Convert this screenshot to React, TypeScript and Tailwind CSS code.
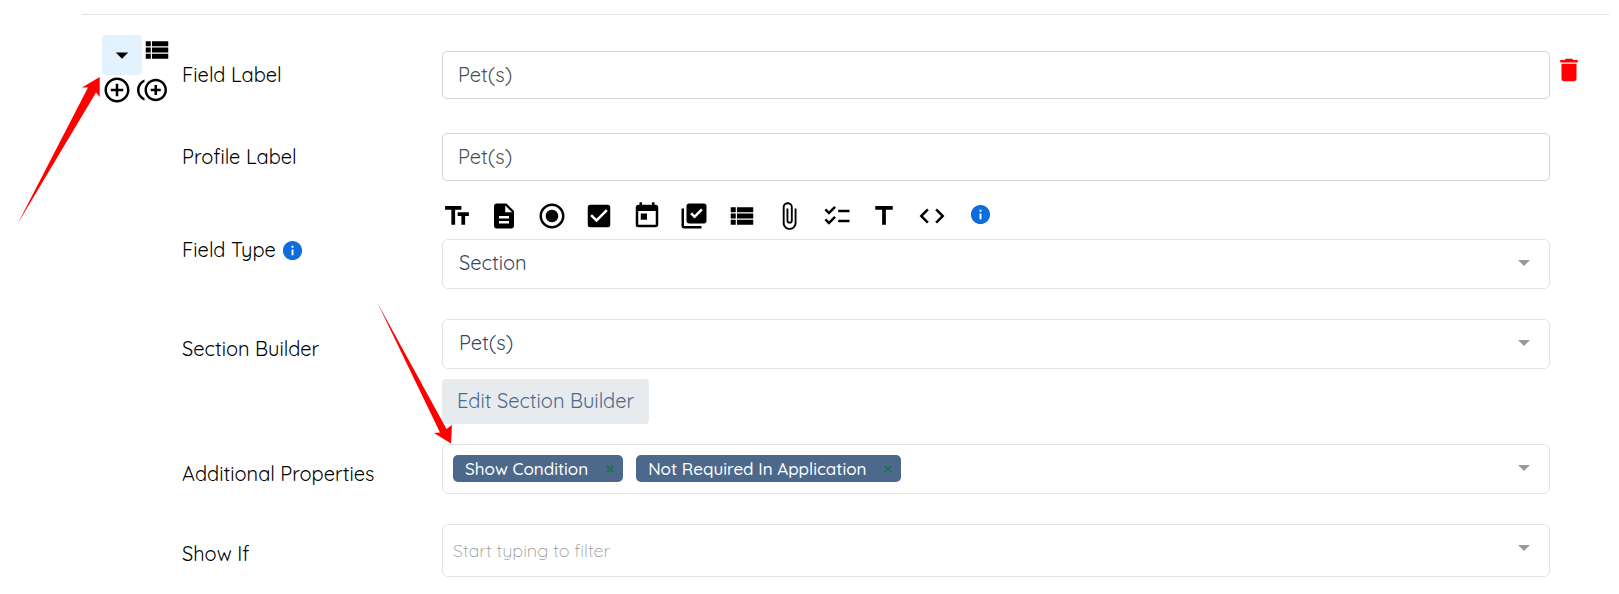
import { useState, type ReactNode } from "react";
import {
  MdAddCircleOutline,
  MdArrowDropDown,
  MdAttachFile,
  MdCheckBox,
  MdChecklist,
  MdCode,
  MdControlPointDuplicate,
  MdDelete,
  MdDescription,
  MdInfo,
  MdLibraryAddCheck,
  MdRadioButtonChecked,
  MdTextFields,
  MdTitle,
  MdToday,
  MdViewList,
} from "react-icons/md";

const fieldTypes = [
  { name: "Text", Icon: MdTextFields },
  { name: "Document", Icon: MdDescription },
  { name: "Radio", Icon: MdRadioButtonChecked },
  { name: "Checkbox", Icon: MdCheckBox },
  { name: "Date", Icon: MdToday },
  { name: "Multiple choice", Icon: MdLibraryAddCheck },
  { name: "Section", Icon: MdViewList },
  { name: "Attachment", Icon: MdAttachFile },
  { name: "Checklist", Icon: MdChecklist },
  { name: "Title", Icon: MdTitle },
  { name: "Code", Icon: MdCode },
];

const textBox =
  "block h-12 w-full rounded-[5px] border border-[#ced4da] bg-white px-[15px] pb-px text-xl text-[#495057] outline-none";
const dropBox = "block w-full rounded-md border border-[#e5e5e5] bg-white outline-none";

function Caret() {
  return (
    <svg
      className="pointer-events-none absolute top-[21px] right-5 h-[6px] w-3 fill-[#999]"
      viewBox="0 0 12 6"
      aria-hidden="true"
    >
      <path d="M0 0h12L6 6z" />
    </svg>
  );
}

type RowProps = { label: string; id: string; labelClass: string; hint?: ReactNode; children: ReactNode };

function Row({ label, id, labelClass, hint, children }: RowProps) {
  return (
    <div className="grid grid-cols-[260px_minmax(0,1fr)] items-start">
      <div className={`flex items-center gap-[5px] ${labelClass}`}>
        <label htmlFor={id} className="text-xl text-black">
          {label}
        </label>
        {hint}
      </div>
      <div>{children}</div>
    </div>
  );
}

function Select({ id, value }: { id: string; value: string }) {
  return (
    <div className="relative">
      <select id={id} className={`${dropBox} h-[50px] appearance-none px-4 pb-0.5 text-xl text-[#34495e]`}>
        <option>{value}</option>
      </select>
      <Caret />
    </div>
  );
}

export default function App() {
  const [label, setLabel] = useState("Pet(s)");
  const [profile, setProfile] = useState("Pet(s)");
  const [tags, setTags] = useState(["Show Condition", "Not Required In Application"]);

  return (
    <main className="relative bg-white pt-3.5 pr-2.5 pb-4 pl-[82px] font-['Quicksand','Lato',sans-serif]">
      <hr className="border-[#e2e2e2]" />
      <div className="flex pt-5 pl-5">
        <div className="grid w-20 shrink-0 grid-cols-[40px_32px] content-start">
          <button type="button" aria-label="Collapse" className="flex size-10 items-center justify-center rounded bg-[#e3f2ff]">
            <MdArrowDropDown className="size-[30px]" />
          </button>
          <button type="button" aria-label="Section" className="flex h-[30px] w-[30px] items-center justify-center">
            <MdViewList className="size-[30px]" />
          </button>
          <button type="button" aria-label="Add field">
            <MdAddCircleOutline className="size-[30px]" />
          </button>
          <button type="button" aria-label="Duplicate field" className="-ml-[5px]">
            <MdControlPointDuplicate className="size-[30px]" />
          </button>
        </div>

        <form className="min-w-0 flex-1 pt-4" onSubmit={(e) => e.preventDefault()}>
          <Row label="Field Label" id="field-label" labelClass="pt-2.5">
            <input id="field-label" className={textBox} value={label} onChange={(e) => setLabel(e.target.value)} />
          </Row>

          <div className="mt-[34px]">
            <Row label="Profile Label" id="profile-label" labelClass="pt-2.5">
              <input
                id="profile-label"
                className={textBox}
                value={profile}
                onChange={(e) => setProfile(e.target.value)}
              />
            </Row>
          </div>

          <div className="mt-5">
            <Row
              label="Field Type"
              id="field-type"
              labelClass="pt-[35px]"
              hint={<MdInfo className="size-[23px] text-[#0d6edb]" />}
            >
              <div className="mb-2 flex items-center gap-[5px]">
                <div className="grid w-[522px] grid-cols-11">
                  {fieldTypes.map(({ name, Icon }) => (
                    <button key={name} type="button" aria-label={name}>
                      <Icon className="size-[30px]" />
                    </button>
                  ))}
                </div>
                <div className="pb-1">
                  <MdInfo className="size-[23px] text-[#0d6edb]" />
                </div>
              </div>
              <Select id="field-type" value="Section" />
            </Row>
          </div>

          <div className="mt-[30px]">
            <Row label="Section Builder" id="section-builder" labelClass="pt-4">
              <Select id="section-builder" value="Pet(s)" />
              <button
                type="button"
                className="mt-2.5 h-[45px] rounded bg-[#e8ebee] px-[15px] pb-px text-xl text-[#4c698b]"
              >
                Edit Section Builder
              </button>
            </Row>
          </div>

          <div className="mt-5">
            <Row label="Additional Properties" id="properties" labelClass="pt-4">
              <div className="relative">
                <div
                  id="properties"
                  className="flex h-[50px] items-start gap-[13px] rounded-md border border-[#e5e5e5] bg-white px-2.5 pt-2.5"
                >
                  {tags.map((tag) => (
                    <span
                      key={tag}
                      className="flex h-[27px] items-center gap-[18px] rounded-[5px] bg-[#4c698b] pr-[9px] pl-3 text-[17px] font-medium text-white"
                    >
                      {tag}
                      <button
                        type="button"
                        aria-label={`Remove ${tag}`}
                        onClick={() => setTags(tags.filter((t) => t !== tag))}
                      >
                        <svg className="size-2 stroke-[#24704f]" viewBox="0 0 8 8" strokeWidth="2">
                          <path d="M0.800 0.800l6.400 6.400M7.200 0.800l-6.400 6.400" />
                        </svg>
                      </button>
                    </span>
                  ))}
                </div>
                <Caret />
              </div>
            </Row>
          </div>

          <div className="mt-[30px]">
            <Row label="Show If" id="show-if" labelClass="pt-4">
              <div className="relative">
                <input
                  id="show-if"
                  className={`${dropBox} h-[53px] px-2.5 text-lg font-light placeholder:text-[#999]`}
                  placeholder="Start typing to filter"
                />
                <Caret />
              </div>
            </Row>
          </div>
        </form>

        <div className="w-[59px] shrink-0 pt-5 pl-1">
          <button type="button" aria-label="Delete field">
            <MdDelete className="size-[30px] text-[#f00]" />
          </button>
        </div>
      </div>

      <svg
        className="pointer-events-none absolute top-0 left-0 h-[450px] w-[460px] fill-[#f00]"
        viewBox="0 0 460 450"
        aria-hidden="true"
      >
        <path d="M17.500 224L88 87.500L82 87.500L99.700 77V97L96 92.500Z" />
        <path d="M377.500 303L446.500 429L452 425L451 443.500L434 433L440 432.500Z" />
      </svg>
    </main>
  );
}
